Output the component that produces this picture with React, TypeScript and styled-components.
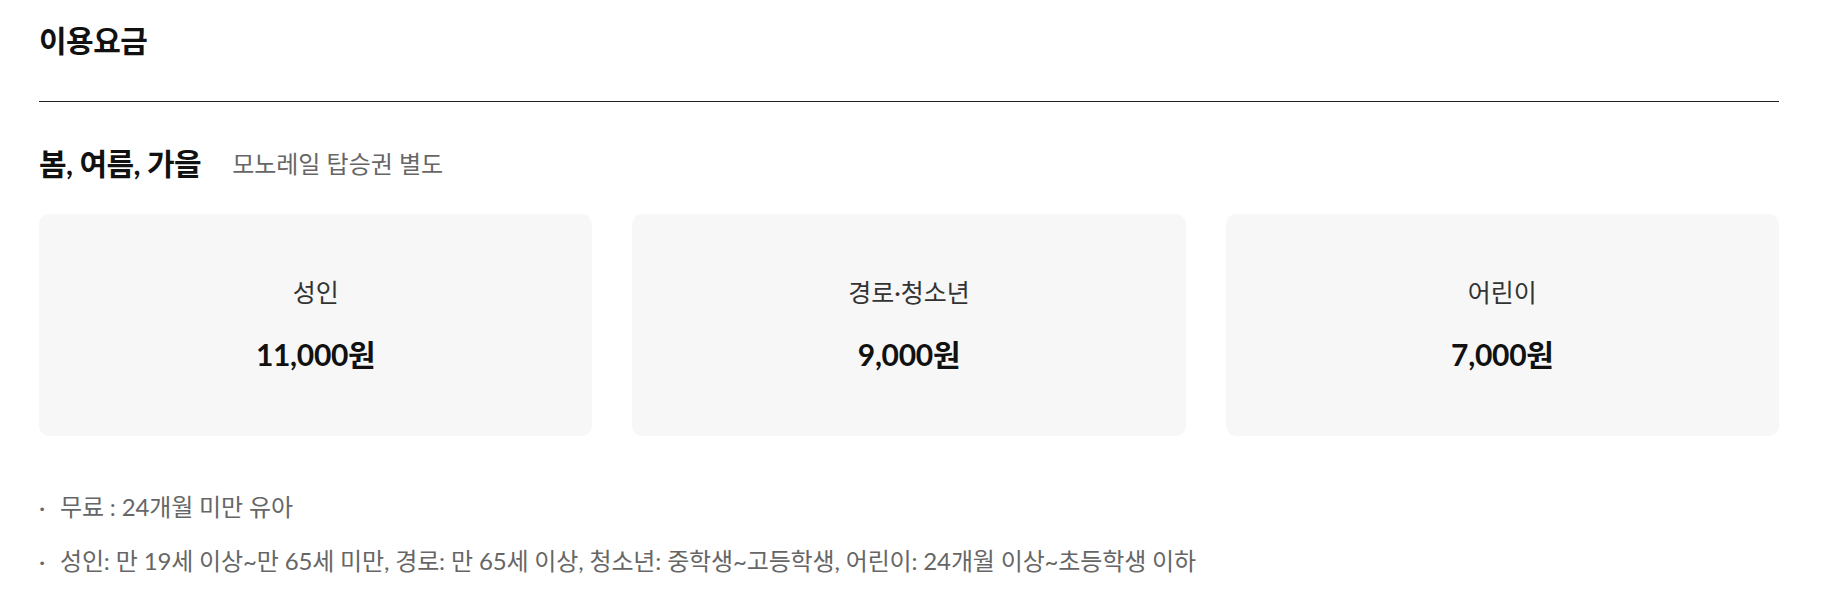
import React from "react";
import styled, { createGlobalStyle } from "styled-components";

const GlobalStyle = createGlobalStyle`
  html, body {
    margin: 0;
    padding: 0;
    background: #ffffff;
  }
  body {
    font-family: Lato, "Noto Sans CJK KR", "Noto Sans", sans-serif;
    color: #111111;
  }
  * { box-sizing: border-box; }
`;

const Page = styled.main`
  width: 1822px;
  padding: 0 43px 0 39px;
`;

const TitleBar = styled.header`
  padding: 21px 0 41px;
  border-bottom: 1px solid #222222;
`;

const Title = styled.h2`
  margin: 0;
  font-size: 30px;
  line-height: 39px;
  font-weight: 700;
  color: #111111;
  letter-spacing: -0.5px;
`;

const SectionHead = styled.div`
  margin-top: 42px;
  display: flex;
  align-items: center;
  gap: 31px;
`;

const SectionTitle = styled.h3`
  margin: 0;
  font-size: 30px;
  line-height: 39px;
  font-weight: 700;
  color: #111111;
  letter-spacing: -0.5px;
`;

const SectionSub = styled.span`
  font-size: 24px;
  line-height: 39px;
  color: #666666;
`;

const Cards = styled.div`
  margin-top: 31px;
  display: grid;
  grid-template-columns: repeat(3, 1fr);
  gap: 40px;
`;

const Card = styled.div`
  height: 222px;
  background: #f7f7f7;
  border-radius: 10px;
  display: flex;
  flex-direction: column;
  align-items: center;
  justify-content: center;
  gap: 27px;
`;

const CardLabel = styled.div`
  font-size: 25px;
  line-height: 32px;
  color: #333333;
`;

const CardPrice = styled.div`
  font-size: 30px;
  line-height: 39px;
  font-weight: 700;
  color: #111111;
  letter-spacing: -0.3px;
`;

const Notes = styled.ul`
  list-style: none;
  margin: 55px 0 0;
  padding: 0;
  display: flex;
  flex-direction: column;
  gap: 22px;
`;

const Note = styled.li`
  position: relative;
  padding-left: 21px;
  font-size: 24px;
  line-height: 32px;
  color: #666666;
  letter-spacing: -0.15px;

  &::before {
    content: "·";
    position: absolute;
    left: 0;
    top: 0;
    color: #666666;
  }
`;

const prices = [
  { label: "성인", price: "11,000원" },
  { label: "경로·청소년", price: "9,000원" },
  { label: "어린이", price: "7,000원" },
];

export default function App() {
  return (
    <>
      <GlobalStyle />
      <Page>
        <TitleBar>
          <Title>이용요금</Title>
        </TitleBar>
        <SectionHead>
          <SectionTitle>봄, 여름, 가을</SectionTitle>
          <SectionSub>모노레일 탑승권 별도</SectionSub>
        </SectionHead>
        <Cards>
          {prices.map((p) => (
            <Card key={p.label}>
              <CardLabel>{p.label}</CardLabel>
              <CardPrice>{p.price}</CardPrice>
            </Card>
          ))}
        </Cards>
        <Notes>
          <Note>무료 : 24개월 미만 유아</Note>
          <Note>
            성인: 만 19세 이상~만 65세 미만, 경로: 만 65세 이상, 청소년: 중학생~고등학생, 어린이: 24개월 이상~초등학생 이하
          </Note>
        </Notes>
      </Page>
    </>
  );
}
